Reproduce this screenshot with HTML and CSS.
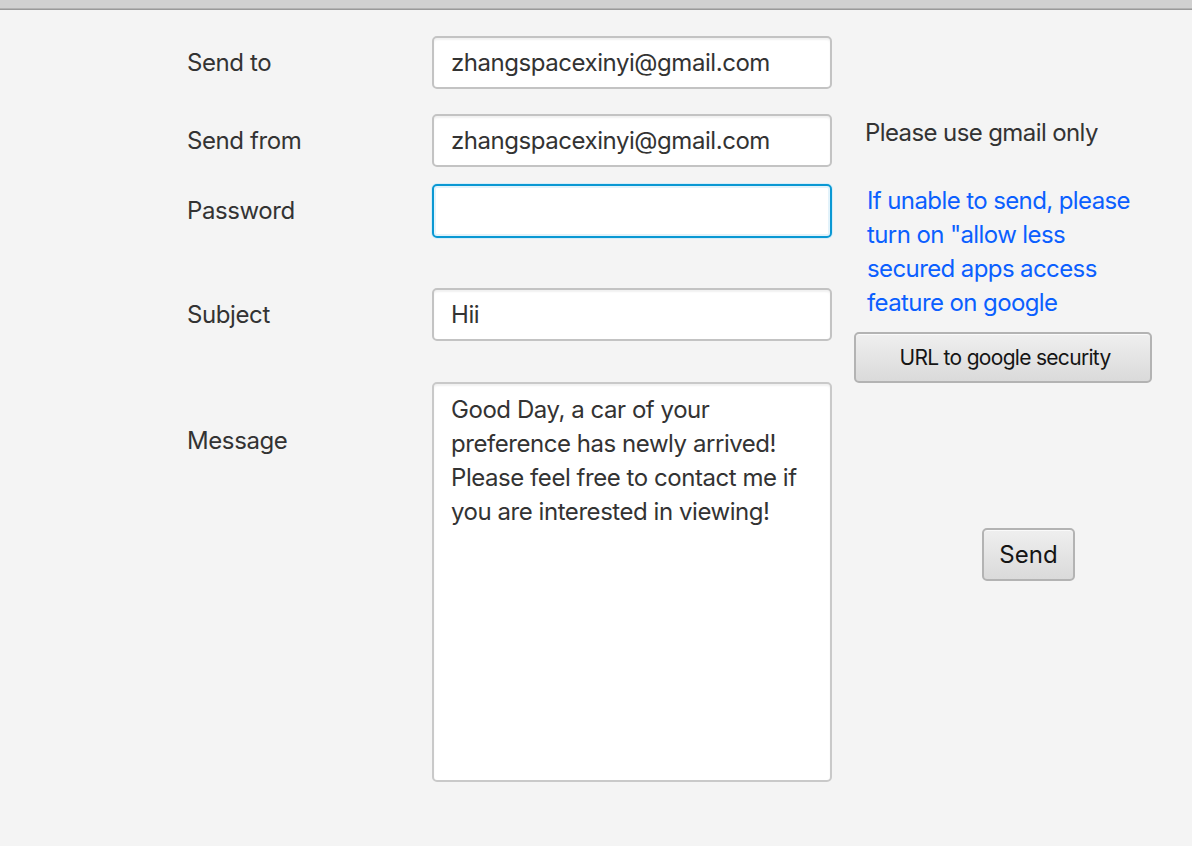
FILE: index.html
```html
<!DOCTYPE html>
<html>
<head>
<meta charset="utf-8">
<link rel="stylesheet" href="styles.css">
</head>
<body>
<div class="topbar"></div>
<div class="page">
  <div class="form">
    <div class="row row-a">
      <label class="lbl">Send to</label>
      <div class="field">zhangspacexinyi@gmail.com</div>
    </div>
    <div class="row row-b">
      <label class="lbl">Send from</label>
      <div class="field">zhangspacexinyi@gmail.com</div>
    </div>
    <div class="row row-c">
      <label class="lbl">Password</label>
      <div class="field focused"></div>
    </div>
    <div class="row row-d">
      <label class="lbl">Subject</label>
      <div class="field">Hii</div>
    </div>
    <div class="row row-e">
      <label class="lbl lbl-top">Message</label>
      <div class="area">Good Day, a car of your<br>preference has newly arrived!<br>Please feel free to contact me if<br>you are interested in viewing!</div>
    </div>
  </div>
  <div class="aside">
    <div class="note">Please use gmail only</div>
    <div class="hint">If unable to send, please<br>turn on "allow less<br>secured apps access<br>feature on google</div>
    <button class="btn btn-url"><span class="clip">URL to google security</span></button>
    <button class="btn btn-send">Send</button>
  </div>
</div>
</body>
</html>
```

FILE: styles.css
```css
html, body {
  margin: 0;
  padding: 0;
}
body {
  background: #f4f4f4;
  font-family: Inter, "Open Sans", "Liberation Sans", sans-serif;
  color: #333333;
  width: 1192px;
  height: 846px;
  overflow: hidden;
}
.topbar {
  height: 8px;
  background: #d1d1d1;
  border-bottom: 1px solid #b3b3b3;
  box-shadow: 0 1px 0 #9a9a9a;
}
.page {
  display: flex;
  padding-top: 27px;
  padding-left: 187px;
}
.form {
  display: flex;
  flex-direction: column;
}
.row {
  display: grid;
  grid-template-columns: 245px 400px;
  align-items: center;
}
.row-b { margin-top: 25px; }
.row-c { margin-top: 17px; }
.row-d { margin-top: 50px; }
.row-e { margin-top: 41px; align-items: start; }
.lbl {
  font-size: 24px;
  line-height: 34px;
  color: #333333;
  letter-spacing: -0.4px;
}
.lbl-top {
  margin-top: 42px;
}
.field {
  box-sizing: border-box;
  height: 53px;
  background: #ffffff;
  border: 2px solid #c3c3c3;
  border-radius: 5px;
  box-shadow: inset 0 2px 2px rgba(0, 0, 0, 0.06);
  padding: 0 17px;
  font-size: 24px;
  line-height: 50px;
  color: #333333;
  letter-spacing: -0.45px;
  white-space: nowrap;
  overflow: hidden;
}
.field.focused {
  height: 54px;
  border: 2px solid #0a98d3;
  box-shadow: 0 0 0 1px #d7eef9, inset 0 0 0 2px #e3f3fb;
}
.area {
  box-sizing: border-box;
  height: 400px;
  background: #ffffff;
  border: 2px solid #c9c9c9;
  border-radius: 5px;
  box-shadow: inset 0 2px 2px rgba(0, 0, 0, 0.06);
  padding: 9px 17px;
  font-size: 24px;
  line-height: 34px;
  color: #333333;
  letter-spacing: -0.45px;
  white-space: nowrap;
}
.aside {
  margin-left: 22px;
  display: flex;
  flex-direction: column;
  align-items: flex-start;
  padding-top: 80px;
}
.note {
  padding-left: 11px;
  font-size: 24px;
  line-height: 34px;
  color: #333333;
  letter-spacing: -0.6px;
}
.hint {
  margin-top: 34px;
  padding-left: 13px;
  font-size: 24px;
  line-height: 34px;
  color: #0b5fff;
  letter-spacing: -0.6px;
}
.btn {
  box-sizing: border-box;
  font-family: Inter, "Open Sans", "Liberation Sans", sans-serif;
  color: #151515;
  background: linear-gradient(#efefef, #dadada);
  border: 2px solid #b3b3b3;
  border-radius: 5px;
  box-shadow: inset 0 1px 0 #fafafa;
  padding: 0;
  cursor: default;
}
.btn-url {
  margin-top: 12px;
  width: 298px;
  height: 51px;
  font-size: 21px;
  display: flex;
  align-items: center;
  justify-content: center;
}
.clip {
  display: block;
  white-space: nowrap;
  letter-spacing: -0.7px;
  margin-left: 4px;
}
.btn-send {
  margin-top: 145px;
  margin-left: 128px;
  width: 93px;
  height: 53px;
  font-size: 24px;
}
```
